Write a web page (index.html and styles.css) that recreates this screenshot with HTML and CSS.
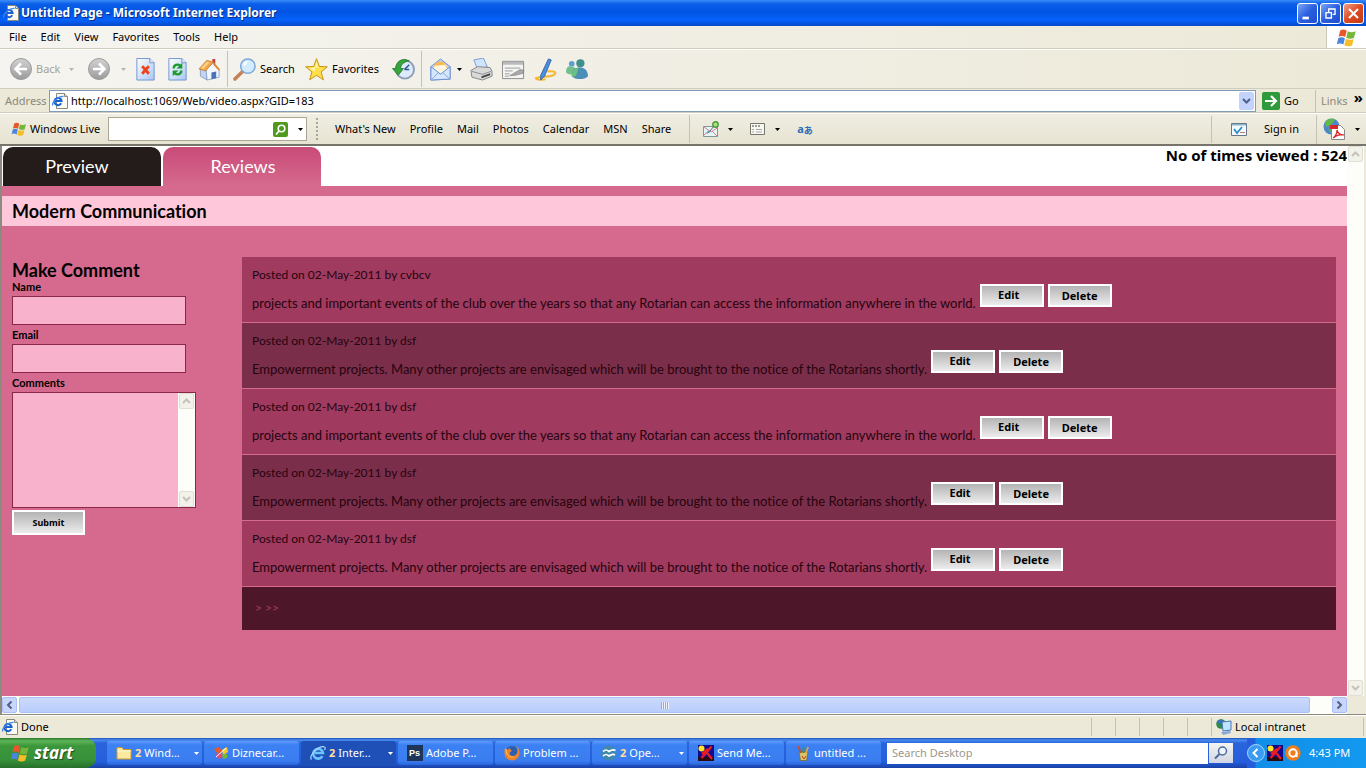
FILE: index.html
```
<!DOCTYPE html>
<html lang="en">
<head>
  <meta charset="utf-8">
  <title>Untitled Page - Microsoft Internet Explorer</title>
  <link rel="stylesheet" href="styles.css">
</head>
<body>

<!-- shared icons -->
<svg class="defs" width="0" height="0" aria-hidden="true">
  <defs>
    <linearGradient id="gSky" x1="0" y1="0" x2="1" y2="1"><stop offset="0" stop-color="#fff"/><stop offset="1" stop-color="#a9c6f5"/></linearGradient>
    <linearGradient id="gGrey" x1="0" y1="0" x2="0" y2="1"><stop offset="0" stop-color="#d2d2d2"/><stop offset="1" stop-color="#9b9b9b"/></linearGradient>
    <symbol id="flag" viewBox="0 0 16 16">
      <path fill="#e8562a" d="M3.2 2.6C5 1.5 6.600 1.700 8.200 2.800L7 7.700C5.400 6.700 3.800 6.600 2 7.500z"/>
      <path fill="#74b53a" d="M9 3.200c1.800 1.100 3.800 1.100 6 .1l-1.300 4.900c-2 1-4 .9-5.900-.1z"/>
      <path fill="#4a86dc" d="M1.800 8.400c1.800-.9 3.400-.8 5 .2l-1.200 4.800c-1.600-1-3.200-1.100-5-.2z"/>
      <path fill="#f5bd27" d="M7.600 9c1.900 1 3.900 1.100 5.900.1l-1.300 4.900c-2 1-4 .9-5.900-.1z"/>
    </symbol>
    <symbol id="iePage" viewBox="0 0 16 16">
      <path d="M4.500.5h8l3 3v12h-11z" fill="#fbfbf4" stroke="#8a8a7c"/>
      <path d="M12.500.5v3h3" fill="#d8d8cc" stroke="#8a8a7c"/>
      <path d="M9.200 10.300A3.600 3.600 0 1 1 9.600 8H3.500" fill="none" stroke="#1c5fcf" stroke-width="2"/>
      <path d="M.8 12.500C-.5 9.500 6 3 11.500 3.500" fill="none" stroke="#3c86e8" stroke-width="1.300"/>
    </symbol>
    <symbol id="ie" viewBox="0 0 16 16">
      <path d="M12.400 11.200A4.900 4.900 0 1 1 13 8H5" fill="none" stroke="#6cc4ff" stroke-width="2.600"/>
      <path d="M1.500 14.500C-1.500 11 9 0 14.500 2c1.200.6.600 2.200 0 3" fill="none" stroke="#a5deff" stroke-width="1.200"/>
    </symbol>
    <symbol id="tri" viewBox="0 0 5 3"><path d="M0 0h5L2.500 3z" fill="currentColor"/></symbol>
    <symbol id="chevDown" viewBox="0 0 9 6"><path d="M1 1l3.500 3.500L8 1" fill="none" stroke="currentColor" stroke-width="2"/></symbol>
    <symbol id="runner" viewBox="0 0 16 16">
      <path fill="#120a8c" d="M0 0h16v16H0z"/><path d="M0 12h16v4H0z" fill="#2a0a10"/>
      <circle cx="3.500" cy="3.500" r="3" fill="#ffe428"/>
      <path d="M13.500 1.500L8 8l-4.500 5M6 5.500l4 3.500 4 5M4 9l6-5" fill="none" stroke="#e81c24" stroke-width="2.300"/>
    </symbol>
  </defs>
</svg>

<header class="title_bar">
  <svg class="ico16"><use href="#iePage"/></svg>
  <h1>Untitled Page - Microsoft Internet Explorer</h1>
  <button class="win_btn" aria-label="Minimize"><svg viewBox="0 0 21 21"><path d="M5 14h7v3H5z" fill="#fff"/></svg></button>
  <button class="win_btn" aria-label="Restore"><svg viewBox="0 0 21 21"><path d="M8.500 10V5.500h7v6H13M5.500 9.500h6v6h-6z" fill="none" stroke="#fff" stroke-width="1.500"/></svg></button>
  <button class="win_btn close" aria-label="Close"><svg viewBox="0 0 21 21"><path d="M5.500 5.500l10 10M15.500 5.500l-10 10" stroke="#fff" stroke-width="2.200"/></svg></button>
</header>

<nav class="menu_bar">
  <a href="#">File</a>
  <a href="#">Edit</a>
  <a href="#">View</a>
  <a href="#">Favorites</a>
  <a href="#">Tools</a>
  <a href="#">Help</a>
  <span class="throbber"><svg width="21" height="21"><use href="#flag"/></svg></span>
</nav>

<div class="tool_bar">
  <button class="tool wide back" disabled>
    <svg class="ico22" viewBox="0 0 22 22"><circle cx="11" cy="11" r="10.500" fill="url(#gGrey)" stroke="#9a9a9a"/><path d="M17 11H6.500M11 5.500L5.500 11l5.500 5.500" fill="none" stroke="#fff" stroke-width="2.600"/></svg>
    <span>Back</span>
  </button>
  <button class="drop off" aria-label="Back list"><svg><use href="#tri"/></svg></button>
  <button class="tool fwd" disabled aria-label="Forward">
    <svg class="ico22" viewBox="0 0 22 22"><circle cx="11" cy="11" r="10.500" fill="url(#gGrey)" stroke="#9a9a9a"/><path d="M5 11h10.500M11 5.500l5.500 5.500-5.500 5.500" fill="none" stroke="#fff" stroke-width="2.600"/></svg>
  </button>
  <button class="drop off" aria-label="Forward list"><svg><use href="#tri"/></svg></button>
  <button class="tool" aria-label="Stop">
    <svg class="ico24" viewBox="0 0 24 24"><path d="M3 .500h13.500l4.500 4.500V23H3z" fill="url(#gSky)" stroke="#6f94d2"/><path d="M16.500.500V5H21" fill="#dfe9fb" stroke="#6f94d2"/><path d="M8.500 8.500l7 8M15.500 8.500l-7 8" stroke="#f0421c" stroke-width="3"/></svg>
  </button>
  <button class="tool" aria-label="Refresh">
    <svg class="ico24" viewBox="0 0 24 24"><path d="M3 .500h13.500l4.500 4.500V23H3z" fill="url(#gSky)" stroke="#6f94d2"/><path d="M16.500.500V5H21" fill="#dfe9fb" stroke="#6f94d2"/><path d="M8 11c0-4 4-5 7-3" fill="none" stroke="#1c9a2c" stroke-width="2.400"/><path d="M17 5v6h-6z" fill="#1c9a2c"/><path d="M16 13c0 4-4 5-7 3" fill="none" stroke="#1c9a2c" stroke-width="2.400"/><path d="M7 19v-6h6z" fill="#1c9a2c"/></svg>
  </button>
  <button class="tool" aria-label="Home">
    <svg class="ico24" viewBox="0 0 24 24"><path d="M15 1h3v6l-3-2z" fill="#c2423c"/><path d="M2.500 11l6 1 1 11-7-4z" fill="#c3d4f3" stroke="#8196c4" stroke-width=".8"/><path d="M8.500 12L16 5l6 7v8l-12.500 3z" fill="#f2f6fd" stroke="#8196c4" stroke-width=".8"/><path d="M14 15l5-1v7l-5 1.200z" fill="#4b72b8"/><path d="M1 11.500L9 2.500l7 1.500-8 9.500z" fill="#f6a544" stroke="#b56a1c" stroke-width=".6"/><path d="M3 10.500L9 4l3 .7-6.500 7z" fill="#ffcf87"/><path d="M16 4l7 8-1.500 1L16 7z" fill="#dd8428"/></svg>
  </button>
  <span class="sep"></span>
  <button class="tool wide search">
    <svg class="ico24" viewBox="0 0 24 24"><path d="M10 14l-8 8" stroke="#c4825a" stroke-width="3.600" stroke-linecap="round"/><circle cx="15.500" cy="8.500" r="7.500" fill="#d3ecff" stroke="#7fa6d6" stroke-width="1.600"/><path d="M11 8c0-3 2-4.500 5-4.500-2 1.500-2 5-5 4.500z" fill="#fff"/></svg>
    <span>Search</span>
  </button>
  <button class="tool wide favorites">
    <svg class="ico24" viewBox="0 0 24 24"><path d="M12 .800l3 8 8.300.400-6.500 5.300 2.400 8.300-7.200-4.700-7.200 4.700 2.400-8.300L.700 9.200 9 8.800z" fill="#ffdf4a" stroke="#c48f10"/><path d="M12 3l2 7h-5l-5 .400 6 4z" fill="#fff3a6"/></svg>
    <span>Favorites</span>
  </button>
  <button class="tool" aria-label="History">
    <svg class="ico24" viewBox="0 0 24 24"><circle cx="13.500" cy="12" r="9.500" fill="#dceafb" stroke="#8c9db8" stroke-width="2"/><path d="M13 12l5-5M13 12h5" stroke="#2c5a96" stroke-width="1.600"/><path d="M18 3C10-1 4 4 4 11H.500l6 7 5.500-7H9c0-4 3-7 9-8z" fill="#37a53a" stroke="#1d7526" stroke-width=".8"/></svg>
  </button>
  <span class="sep"></span>
  <button class="tool mail" aria-label="Mail">
    <svg class="ico24" viewBox="0 0 24 24"><path d="M2 9L12 1l10 8v13L2 23z" fill="#bcd6fa" stroke="#6f8fd0"/><path d="M5 10c0-8 12-9 14 0l-7 5z" fill="#f8b94e"/><path d="M6 8l11-1 2 5-7 4-7-5z" fill="#fff6df"/><path d="M2 9l10 8L22 9v13L2 23z" fill="#d5e7ff" stroke="#6f8fd0"/><path d="M2 23l8-8M22 22l-8-7" stroke="#8ba8de"/></svg>
  </button>
  <button class="drop" aria-label="Mail list"><svg><use href="#tri"/></svg></button>
  <button class="tool" aria-label="Print">
    <svg class="ico24" viewBox="0 0 24 24"><path d="M4 2l10-2 4 9-10 3z" fill="#cfe4ff" stroke="#7d9cd0"/><path d="M1 13l7-4 13 1 2 4v5l-10 4-11-3z" fill="#d9d9d9" stroke="#858585"/><path d="M2 14l11 3 9-3" fill="none" stroke="#8d8d8d"/><path d="M12 19l9-3v2l-9 3z" fill="#444"/></svg>
  </button>
  <button class="tool" aria-label="Edit page">
    <svg class="ico24" viewBox="0 0 24 24"><path d="M.500 3.500h22v18H.500z" fill="#f4f4f2" stroke="#8b8b8b"/><path d="M1 4h21v3H1z" fill="#b9b9b9"/><path d="M3 10.500h16M3 13.500h8M3 16.500h5M3 19h4" stroke="#9b9b9b"/><path d="M8 18.500l11-6.500 4 1-1 3-8 2z" fill="#a9a9a9" stroke="#777" stroke-width=".6"/></svg>
  </button>
  <button class="tool" aria-label="Highlight">
    <svg class="ico24" viewBox="0 0 24 24"><path d="M14 14c9-1 10 2 6 4-5 2-13 1-18 3 0 2 8 2 10 1" fill="none" stroke="#f7b733" stroke-width="2.200"/><path d="M15 1l3 1-7 17-4 4 0-5z" fill="#4b8fe0" stroke="#24549c" stroke-width=".8"/></svg>
  </button>
  <button class="tool" aria-label="Messenger">
    <svg class="ico24" viewBox="0 0 24 24"><circle cx="6" cy="6" r="3" fill="#5f9fd0"/><path d="M0 15c0-6 3-7 6-6 4 0 5 3 4 7-4 2-8 1-10-1z" fill="#74c08c"/><circle cx="15" cy="5.500" r="4.300" fill="#3f8f8c"/><path d="M6 19c0-7 4-10 9-9 5 0 8 4 8 9-4 4-13 4-17 0z" fill="#4b8fb8"/><path d="M13 10c-5 1-7 5-7 9 5 3 6-5 7-9z" fill="#6cc17c"/></svg>
  </button>
</div>

<form class="address_bar">
  <label for="address">Address</label>
  <div class="address_box">
    <svg class="ico16"><use href="#iePage"/></svg>
    <input type="text" id="address" value="http://localhost:1069/Web/video.aspx?GID=183">
    <button type="button" class="combo" aria-label="Show addresses"><svg width="9" height="6"><use href="#chevDown"/></svg></button>
  </div>
  <button type="button" class="go">
    <svg viewBox="0 0 18 18"><path d="M0 0h18v18H0z" fill="#2f9a3a"/><path d="M3 9h11M9 4l5 5-5 5" fill="none" stroke="#fff" stroke-width="2.200"/></svg>
    Go
  </button>
  <div class="links">Links <b>»</b></div>
</form>

<div class="live_bar">
  <a class="live_logo" href="#"><svg class="ico16"><use href="#flag"/></svg>Windows Live</a>
  <div class="live_search">
    <input type="text" aria-label="Live search">
    <button class="find" aria-label="Search the web"><svg viewBox="0 0 15 15"><circle cx="8.500" cy="6.500" r="3.300" fill="none" stroke="#fff" stroke-width="1.600"/><path d="M6 9l-3 3.500" stroke="#fff" stroke-width="1.800"/></svg></button>
    <button class="drop" aria-label="Search options"><svg><use href="#tri"/></svg></button>
  </div>
  <span class="grip"></span>
  <nav class="live_links">
    <a href="#">What's New</a>
    <a href="#">Profile</a>
    <a href="#">Mail</a>
    <a href="#">Photos</a>
    <a href="#">Calendar</a>
    <a href="#">MSN</a>
    <a href="#">Share</a>
  </nav>
  <div class="live_tools">
    <button class="drop_tool" aria-label="Map"><svg class="ico16" viewBox="0 0 16 16"><path d="M.500 5.500h14v10H.500z" fill="#e6f5f5" stroke="#7a9a9a"/><path d="M1 6l7 5 6-4M1 14l5-4M9 10l5 5" stroke="#e27a8c" fill="none"/><path d="M4 12l3-2" stroke="#3aa6c8" stroke-width="2"/><path d="M7 10l4-5" stroke="#666"/><circle cx="12.500" cy="3.500" r="2.700" fill="#aee08c" stroke="#4b9a3a" stroke-width="1.400"/></svg><svg class="tri"><use href="#tri"/></svg></button>
    <button class="drop_tool" aria-label="Form fill"><svg class="ico16" viewBox="0 0 16 16"><path d="M.500 2.500h14v11H.500z" fill="#f8f8f2" stroke="#77776c"/><path d="M2 5h8" stroke="#444" stroke-dasharray="2 1"/><path d="M2 8.500h2M6 8.500h6M2 11h2M6 11h6" stroke="#a9a9a9"/></svg><svg class="tri"><use href="#tri"/></svg></button>
    <button class="drop_tool translate" aria-label="Translate"><span>a</span><span class="kana">あ</span></button>
  </div>
  <button class="sign_in"><svg class="ico16" viewBox="0 0 16 16"><path d="M.500 2.500h15v12H.500z" fill="#f4fafd" stroke="#66788a"/><path d="M1 3h14v1.500H1z" fill="#8fb2c8"/><path d="M3 8l3 4 5-6" fill="none" stroke="#2d8cc4" stroke-width="1.800"/><path d="M9 11.500h5" stroke="#c47a6a"/></svg><span>Sign in</span></button>
  <button class="pdf" aria-label="Convert to PDF"><svg class="ico22" viewBox="0 0 22 22"><circle cx="8.500" cy="8.500" r="8" fill="#4b86c8"/><path d="M2 4c3-4 9-4 10-2l-4 5-5 2zM5 11l5 1-1 4z" fill="#63b84a"/><path d="M8.500 7.500h9l4 4v10h-13z" fill="#fff" stroke="#888"/><path d="M7 7h8v4H7z" fill="#d8262a"/><path d="M10 20c3-2 4-5 4-8 1 4 3 5 7 5-4-1-7 0-11 3z" fill="none" stroke="#d8262a" stroke-width="1.200"/></svg><svg class="tri"><use href="#tri"/></svg></button>
</div>

<main class="viewport">
  <div class="page">
    <div class="page_top">
      <a class="tab" href="#">Preview</a>
      <a class="tab active" href="#">Reviews</a>
      <p class="views">No of times viewed : 524</p>
    </div>
    <h2 class="page_title">Modern Communication</h2>
    <div class="content">
      <form class="comment_form">
        <h3>Make Comment</h3>
        <label for="name">Name</label>
        <input type="text" id="name">
        <label for="email">Email</label>
        <input type="text" id="email">
        <label for="comments">Comments</label>
        <div class="area">
          <textarea id="comments"></textarea>
          <div class="area_scroll">
            <span class="scroll_btn off up"><svg width="9" height="6"><use href="#chevDown"/></svg></span>
            <span class="scroll_btn off"><svg width="9" height="6"><use href="#chevDown"/></svg></span>
          </div>
        </div>
        <button type="button" class="btn submit">Submit</button>
      </form>

      <div class="comments">
        <article class="comment">
          <p>Posted on 02-May-2011 by cvbcv</p>
          <div class="comment_body">
            <p>projects and important events of the club over the years so that any Rotarian can access the information anywhere in the world.</p>
            <button class="btn edit">Edit</button>
            <button class="btn">Delete</button>
          </div>
        </article>
        <article class="comment">
          <p>Posted on 02-May-2011 by dsf</p>
          <div class="comment_body">
            <p>Empowerment projects. Many other projects are envisaged which will be brought to the notice of the Rotarians shortly.</p>
            <button class="btn edit">Edit</button>
            <button class="btn">Delete</button>
          </div>
        </article>
        <article class="comment">
          <p>Posted on 02-May-2011 by dsf</p>
          <div class="comment_body">
            <p>projects and important events of the club over the years so that any Rotarian can access the information anywhere in the world.</p>
            <button class="btn edit">Edit</button>
            <button class="btn">Delete</button>
          </div>
        </article>
        <article class="comment">
          <p>Posted on 02-May-2011 by dsf</p>
          <div class="comment_body">
            <p>Empowerment projects. Many other projects are envisaged which will be brought to the notice of the Rotarians shortly.</p>
            <button class="btn edit">Edit</button>
            <button class="btn">Delete</button>
          </div>
        </article>
        <article class="comment">
          <p>Posted on 02-May-2011 by dsf</p>
          <div class="comment_body">
            <p>Empowerment projects. Many other projects are envisaged which will be brought to the notice of the Rotarians shortly.</p>
            <button class="btn edit">Edit</button>
            <button class="btn">Delete</button>
          </div>
        </article>
        <div class="pager"><a href="#">&gt;</a> <a href="#">&gt;&gt;</a></div>
      </div>
    </div>
  </div>
  <div class="v_scroll">
    <span class="scroll_btn off up"><svg width="9" height="6"><use href="#chevDown"/></svg></span>
    <span class="scroll_btn off"><svg width="9" height="6"><use href="#chevDown"/></svg></span>
  </div>
  <div class="h_scroll">
    <span class="scroll_btn left"><svg width="9" height="6"><use href="#chevDown"/></svg></span>
    <span class="thumb"><i></i></span>
    <span class="scroll_btn right"><svg width="9" height="6"><use href="#chevDown"/></svg></span>
  </div>
  <div class="corner"></div>
</main>

<div class="status_bar">
  <svg class="ico16"><use href="#iePage"/></svg>
  <span class="status_text">Done</span>
  <span class="cell"></span>
  <span class="cell"></span>
  <span class="cell"></span>
  <span class="cell"></span>
  <span class="cell"></span>
  <span class="zone"><svg class="ico16" viewBox="0 0 16 16"><circle cx="5" cy="5" r="4.800" fill="#2f8a4a"/><path d="M1 3c2-3 5-3 6-2L4 5z" fill="#3b6fd0"/><path d="M6 3l9-1v9l-8 1z" fill="#bfe4ff" stroke="#4b78b8"/><path d="M5 13l9-1 1 2-8 2z" fill="#8aa8d8"/></svg>Local intranet</span>
</div>

<footer class="task_bar">
  <button class="start"><svg width="20" height="20"><use href="#flag"/></svg>start</button>
  <nav class="tasks">
    <button class="task"><svg class="ico16" viewBox="0 0 16 16"><path d="M1 2.500h5l1.500 2H15v9.500H1z" fill="#ffe9a0" stroke="#c99a2a"/><path d="M1 6h14" stroke="#fff6cf"/></svg><b>2</b><span>Wind...</span><svg class="tri"><use href="#tri"/></svg></button>
    <button class="task"><svg class="ico16" viewBox="0 0 16 16"><path d="M1 4l5-2 3 4-4 3z" fill="#e85a2a"/><path d="M9 5l5-3 1 5-5 3z" fill="#f7c832"/><path d="M3 9l5-2 2 5-5 2z" fill="#e04a7a"/><path d="M9 9l5 0 0 4-4 1z" fill="#74b83a"/><path d="M3 12L13 3" stroke="#fff"/></svg><span>Diznecar...</span></button>
    <button class="task current"><svg class="ico16"><use href="#ie"/></svg><b>2</b><span>Inter...</span><svg class="tri"><use href="#tri"/></svg></button>
    <button class="task"><svg class="ico16" viewBox="0 0 16 16"><path d="M0 0h16v16H0z" fill="#1c3558"/><text x="2" y="11" class="ps">Ps</text></svg><span>Adobe P...</span></button>
    <button class="task"><svg class="ico16" viewBox="0 0 16 16"><circle cx="8" cy="8" r="7" fill="#2d5fae"/><path d="M1 3c-2 8 2 12.500 7 12.500S17 11 15 5c-.500-2-2-3.500-3-4 3 5 1 10-3 10-3 0-4-2-3-4l2-1-3-3-1 2z" fill="#f0822a"/><path d="M2 4c0 6 4 9 8 8" fill="none" stroke="#ffcb4a"/></svg><span>Problem ...</span></button>
    <button class="task"><svg class="ico16" viewBox="0 0 16 16"><circle cx="8" cy="8" r="7.500" fill="#3f8aac"/><path d="M2 6.500c3-2.500 4-1.500 6 0 2-1.500 4-2.500 6.500-1M2 11c3-2.500 4-1.500 6 0 2-1.500 4-2.500 6-1" fill="none" stroke="#fff" stroke-width="1.700"/></svg><b>2</b><span>Ope...</span><svg class="tri"><use href="#tri"/></svg></button>
    <button class="task"><svg class="ico16"><use href="#runner"/></svg><span>Send Me...</span></button>
    <button class="task"><svg class="ico16" viewBox="0 0 16 16"><path d="M4 7h9l-1.500 8.500h-6z" fill="#d9c46a" stroke="#7a6a2a" stroke-width=".8"/><path d="M6 8L3 1" stroke="#c4502a" stroke-width="1.800"/><path d="M8.500 8V2" stroke="#3a9a4a" stroke-width="1.800"/><path d="M11 8l2-6" stroke="#e8a03a" stroke-width="1.800"/><path d="M7 11l2 3 2-3" stroke="#d03a2a" fill="none"/></svg><span>untitled ...</span></button>
  </nav>
  <input class="desk_search" type="text" placeholder="Search Desktop" aria-label="Search Desktop">
  <button class="desk_go" aria-label="Search"><svg class="ico16" viewBox="0 0 16 16"><circle cx="9.500" cy="6" r="4" fill="#eef5ff" stroke="#4a6aa0" stroke-width="1.500"/><path d="M6.500 9L2 13.500" stroke="#4a6aa0" stroke-width="2"/></svg></button>
  <div class="tray">
    <button class="tray_more" aria-label="Show hidden icons"><svg viewBox="0 0 18 18"><circle cx="9" cy="9" r="8.500" fill="#3a9cf0" stroke="#a5d6ff"/><path d="M10.500 5L6.500 9l4 4" fill="none" stroke="#fff" stroke-width="2"/></svg></button>
    <svg class="ico16"><use href="#runner"/></svg>
    <svg class="ico16" viewBox="0 0 16 16"><circle cx="8" cy="8" r="7.700" fill="#ee7d1c"/><circle cx="8" cy="8" r="3.700" fill="none" stroke="#fff" stroke-width="2"/><path d="M11.500 8v4" stroke="#fff" stroke-width="2"/></svg>
    <time>4:43 PM</time>
  </div>
</footer>

</body>
</html>
```
FILE: styles.css
```
*{
    box-sizing: border-box;
}
html,
body{
    height: 100%;
}
body{
    display: flex;
    flex-direction: column;
    margin: 0;
    overflow: hidden;
    background: #ece9d8;
    color: #000;
    font: 11px/16px "Noto Sans", Tahoma, sans-serif;
}
h1, h2, h3, p{
    margin: 0;
}
a{
    color: inherit;
    text-decoration: none;
}
button,
input,
textarea{
    margin: 0;
    padding: 0;
    border: 0;
    border-radius: 0;
    outline: none;
    background: transparent;
    color: inherit;
    font: inherit;
}
svg{
    display: block;
    flex: none;
}
.defs{
    position: absolute;
}
.ico16{
    width: 16px;
    height: 16px;
}
.ico22{
    width: 22px;
    height: 22px;
}
.ico24{
    width: 23px;
    height: 23px;
}
.tri{
    width: 5px;
    height: 3px;
}

/* title bar */
.title_bar{
    display: flex;
    flex: none;
    align-items: center;
    gap: 2px;
    height: 26px;
    padding: 0 2px 0 3px;
    background: linear-gradient(#3b8cf8 0, #0a5ee8 4px, #0054e3 12px, #0661fb 20px, #0348c8 100%);
}
.title_bar h1{
    flex: 1;
    color: #fff;
    font: bold 12px/20px "Noto Sans", "Trebuchet MS", sans-serif;
    text-shadow: 1px 1px 0 #0a2a80;
}
.win_btn{
    width: 21px;
    height: 21px;
    border: 1px solid #fff;
    border-radius: 3px;
    background: linear-gradient(135deg, #7ea5f5, #2a5fe0 50%, #1f4ed0);
}
.win_btn.close{
    background: linear-gradient(135deg, #f0a088, #dd4a22 50%, #c23a14);
}

/* menu */
.menu_bar{
    display: flex;
    flex: none;
    align-items: center;
    gap: 14px;
    height: 23px;
    padding-left: 9px;
    border-bottom: 1px solid #d0cdbd;
    background: linear-gradient(90deg, #f5f4f0, #ece9d8);
}
.throbber{
    display: flex;
    align-self: stretch;
    align-items: center;
    justify-content: center;
    width: 40px;
    margin-left: auto;
    border-left: 1px solid #cbc8b8;
    background: #fff;
}

/* standard buttons */
.tool_bar{
    display: flex;
    flex: none;
    align-items: center;
    height: 40px;
    padding-left: 10px;
    border-top: 1px solid #fff;
    border-bottom: 1px solid #d0cdbd;
    background: linear-gradient(90deg, #f5f4f0, #ece9d8);
}
.tool{
    display: flex;
    align-items: center;
    justify-content: center;
    width: 32px;
    height: 32px;
}
.tool.wide{
    justify-content: flex-start;
    gap: 4px;
}
.tool.back{
    width: 55px;
    color: #a5a295;
}
.tool.fwd{
    width: 40px;
    padding-left: 4px;
}
.tool.search{
    width: 72px;
}
.tool.favorites{
    width: 82px;
}
.tool.mail{
    width: 26px;
}
.drop{
    display: flex;
    justify-content: center;
    width: 12px;
}
.drop svg{
    width: 5px;
    height: 3px;
}
.drop.off{
    color: #b8b5a8;
}
.sep{
    width: 1px;
    height: 36px;
    margin: 0 5px 0 2px;
    background: #c5c2b2;
}

/* address */
.address_bar{
    display: flex;
    flex: none;
    align-items: center;
    height: 24px;
    padding-left: 5px;
    border-bottom: 1px solid #d0cdbd;
}
.address_bar label{
    width: 44px;
    color: #8a887c;
}
.address_box{
    display: flex;
    flex: 1;
    align-items: center;
    gap: 3px;
    height: 22px;
    padding: 0 1px 0 2px;
    border: 1px solid #7f9db9;
    background: #fff;
}
.address_box input{
    flex: 1;
}
.combo{
    display: flex;
    align-items: center;
    justify-content: center;
    width: 15px;
    height: 18px;
    border-radius: 2px;
    background: #c3d3fd;
    color: #4d6185;
}
.go{
    display: flex;
    align-items: center;
    gap: 4px;
    width: 59px;
    padding-left: 6px;
}
.go svg{
    width: 18px;
    height: 18px;
    border-radius: 2px;
}
.links{
    display: flex;
    justify-content: space-between;
    width: 51px;
    padding: 3px 3px 3px 5px;
    border-left: 1px solid #c5c2b2;
    color: #8a887c;
}
.links b{
    color: #000;
    font-size: 15px;
    line-height: 8px;
}

/* live toolbar */
.live_bar{
    display: flex;
    flex: none;
    align-items: center;
    height: 33px;
    padding-left: 11px;
    border-top: 1px solid #fff;
    border-bottom: 2px solid #77756a;
    background: linear-gradient(#f0eee2, #e6e3d2);
}
.live_logo{
    display: flex;
    align-items: center;
    gap: 3px;
    width: 97px;
}
.live_search{
    display: flex;
    align-items: center;
    width: 199px;
    height: 24px;
    border: 1px solid #a9a696;
    background: #fff;
}
.live_search input{
    flex: 1;
    min-width: 0;
    padding-left: 4px;
}
.find{
    width: 15px;
    height: 15px;
    margin-right: 6px;
    border-radius: 2px;
    background: #4f9a1c;
}
.grip{
    height: 22px;
    margin: 0 17px 0 9px;
    border-left: 2px dotted #a9a696;
}
.live_links{
    display: flex;
    gap: 14px;
}
.live_tools{
    display: flex;
    gap: 17px;
    margin-left: 18px;
    padding: 6px 0 6px 13px;
    border-left: 1px solid #c5c2b2;
}
.drop_tool,
.sign_in,
.pdf{
    display: flex;
    align-items: center;
    gap: 9px;
}
.translate{
    gap: 0;
    color: #2d6fb8;
    font-weight: bold;
}
.kana{
    padding-top: 4px;
    font: bold 9px/12px "Noto Sans CJK JP", sans-serif;
}
.sign_in{
    gap: 17px;
    width: 105px;
    height: 27px;
    margin-left: auto;
    padding-left: 19px;
    border-left: 1px solid #c5c2b2;
}
.pdf{
    gap: 10px;
    width: 50px;
    height: 29px;
    padding-left: 6px;
    border-left: 1px solid #c5c2b2;
}

/* browser viewport */
.viewport{
    display: grid;
    flex: 1;
    grid-template: 1fr 18px / 1fr 17px;
    min-height: 0;
    padding-right: 2px;
    border-left: 2px solid #8d8b80;
    border-bottom: 1px solid #8d8b80;
}
.page{
    overflow: hidden;
    background: #d56a8e;
    font-family: Lato, "Trebuchet MS", sans-serif;
    font-size: 12px;
    font-variant-ligatures: none;
}
.page_top{
    display: flex;
    gap: 2px;
    height: 40px;
    padding: 1px 0 0 1px;
    background: #fff;
}
.tab{
    width: 158px;
    padding-right: 10px;
    border-radius: 10px 10px 0 0;
    background: #231c1a;
    color: #fff;
    font-size: 18px;
    line-height: 39px;
    text-align: center;
}
.tab.active{
    padding: 0 0 0 2px;
    background: linear-gradient(#c94b78, #d56a8e);
}
.views{
    margin-left: auto;
    font-family: "Noto Sans", "Trebuchet MS", sans-serif;
    font-size: 15px;
    font-weight: bold;
}
.page_title{
    margin-top: 10px;
    padding-left: 10px;
    background: #ffc8da;
    font-size: 18px;
    line-height: 30px;
}
.content{
    display: flex;
    padding: 31px 11px 0 10px;
}
.comment_form{
    flex: none;
    width: 230px;
    padding-top: 5px;
}
.comment_form h3{
    font-size: 18px;
    line-height: 16px;
}
.comment_form label{
    display: block;
    margin-bottom: 1px;
    font-size: 11px;
    font-weight: bold;
    line-height: 17px;
}
.comment_form input{
    display: block;
    width: 174px;
    height: 29px;
    margin-bottom: 1px;
    padding: 0 4px;
    border: 1px solid #8a2648;
    background: #f8b2cb;
}
.area{
    display: flex;
    width: 184px;
    height: 116px;
    margin-bottom: 2px;
    border: 1px solid #8a2648;
}
.area textarea{
    flex: 1;
    min-width: 0;
    resize: none;
    background: #f8b2cb;
}
.area_scroll,
.v_scroll{
    display: flex;
    flex-direction: column;
    justify-content: space-between;
    align-items: center;
    width: 17px;
    background: #fdfdfa;
}
.scroll_btn{
    display: flex;
    flex: none;
    align-items: center;
    justify-content: center;
    width: 15px;
    height: 16px;
    border: 1px solid #a9bff5;
    border-radius: 2px;
    background: #c8d6fb;
    color: #4d6185;
}
.scroll_btn.off{
    border-color: #e0dfd3;
    background: #f2f1ea;
    color: #c5c4b8;
}
.scroll_btn.up svg{
    transform: rotate(180deg);
}
.scroll_btn.left svg{
    transform: rotate(90deg);
}
.scroll_btn.right svg{
    transform: rotate(-90deg);
}
.btn{
    flex: none;
    width: 64px;
    height: 23px;
    border: 2px solid #fff;
    background: linear-gradient(#b4b4b4, #ececec);
    color: #000;
    font: bold 11px/16px "Noto Sans", Tahoma, sans-serif;
}
.btn.edit{
    padding: 0 6px 2px 0;
}
.btn.submit{
    width: 73px;
    height: 25px;
    font-size: 9px;
}
.comments{
    flex: 1;
    min-width: 0;
}
.comment{
    padding: 9px 10px 10px;
    border-bottom: 1px solid #d56a8e;
    background: #a03a5e;
    color: #26040f;
    line-height: 18px;
}
.comment:nth-child(even){
    background: #7b2e49;
}
.comment_body{
    display: flex;
    gap: 4px;
    height: 28px;
    font-size: 13px;
}
.comment_body p{
    align-self: flex-end;
}
.pager{
    height: 43px;
    padding: 13px;
    background: #4d1729;
    color: #a03a5e;
}
.h_scroll{
    display: flex;
    align-items: center;
    gap: 2px;
    background: #fdfdfa;
}
.thumb{
    display: flex;
    align-items: center;
    justify-content: center;
    flex: 1;
    height: 16px;
    margin-right: 20px;
    border: 1px solid #a9bff5;
    border-radius: 2px;
    background: linear-gradient(#cbdafd, #b9cdfb);
}
.thumb i{
    width: 8px;
    height: 7px;
    background: repeating-linear-gradient(90deg, #8fa8e0 0 1px, #eef3ff 1px 2px);
}

/* status bar */
.status_bar{
    display: flex;
    flex: none;
    align-items: center;
    height: 23px;
    padding: 0 2px;
    border-top: 1px solid #fff;
}
.status_text{
    flex: 1;
    padding-left: 3px;
}
.cell{
    width: 24px;
    height: 18px;
    border-left: 1px solid #c5c2b2;
}
.zone{
    display: flex;
    align-items: center;
    gap: 3px;
    width: 153px;
    height: 18px;
    padding-left: 4px;
    border: solid #c5c2b2;
    border-width: 0 1px;
}

/* taskbar */
.task_bar{
    display: flex;
    flex: none;
    align-items: center;
    height: 30px;
    background: linear-gradient(#1f4fb8 0, #4a8cf0 2px, #2a64dc 5px, #245edb 24px, #1941a5 100%);
    color: #fff;
}
.start{
    display: flex;
    align-items: center;
    gap: 4px;
    width: 96px;
    height: 30px;
    padding-left: 10px;
    border-radius: 0 10px 10px 0;
    background: linear-gradient(#2f7a2c 0, #5cb457 3px, #3c963a 8px, #37913a 22px, #27702a 100%);
    font: italic bold 17px/26px "Open Sans", "Trebuchet MS", sans-serif;
    text-shadow: 1px 1px 1px #1c4a1c;
}
.tasks{
    display: flex;
    flex: none;
    gap: 2px;
    margin: 0 6px 0 11px;
}
.task{
    display: flex;
    align-items: center;
    gap: 3px;
    width: 95px;
    height: 24px;
    padding: 0 3px 0 9px;
    border-radius: 3px;
    background: linear-gradient(#5f9bfa 0, #3c81f3 4px, #3a7df0 20px, #2a64d8 100%);
    color: #fff;
}
.task.current{
    background: #1e50b8;
}
.task b{
    color: #ffdf9a;
}
.task .tri{
    margin-left: auto;
}
.ps{
    fill: #fff;
    font: bold 9px "Liberation Sans", sans-serif;
}
.desk_search{
    flex: 1;
    min-width: 0;
    height: 21px;
    padding: 0 5px 2px;
    background: #fff;
    color: #000;
}
.desk_search::placeholder{
    color: #9a988c;
    opacity: 1;
}
.desk_go{
    display: flex;
    align-items: center;
    justify-content: center;
    width: 24px;
    height: 20px;
    margin: 0 14px 0 1px;
    background: linear-gradient(#f4f4f0, #cfd6e4);
}
.tray{
    display: flex;
    align-items: center;
    gap: 2px;
    width: 119px;
    height: 30px;
    background: linear-gradient(90deg, #245edb 0 8px, #118ee9 9px, #1399ef);
}
.tray_more{
    width: 18px;
    height: 18px;
}
.tray time{
    margin-left: 6px;
}
```
